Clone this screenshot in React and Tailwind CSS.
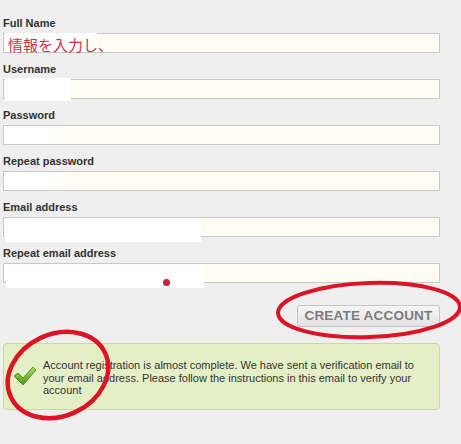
import React from 'react'

const fields = [
  { label: 'Full Name', cover: 'full' },
  { label: 'Username', cover: 'user' },
  { label: 'Password', cover: 'fade' },
  { label: 'Repeat password', cover: 'fade' },
  { label: 'Email address', cover: 'email' },
  { label: 'Repeat email address', cover: 'email2' },
]

// white patches painted over the inputs in the screenshot
function Cover({ kind }) {
  if (kind === 'full')
    return (
      <>
        <div className="absolute left-[1px] top-[-1px] w-[92px] h-[19px] bg-white" />
        <span className="absolute left-[4px] top-[2px] text-[15px] leading-[18px] text-[#cc3344] whitespace-nowrap font-['Noto_Sans_CJK_JP',sans-serif]">
          情報を入力し、
        </span>
      </>
    )
  if (kind === 'user') return <div className="absolute left-[1px] top-[-2px] w-[66px] h-[23px] bg-white" />
  if (kind === 'fade')
    return <div className="absolute left-0 top-0 w-[62px] h-full bg-gradient-to-r from-white from-70% to-transparent" />
  if (kind === 'email') return <div className="absolute left-[1px] top-[1px] w-[196px] h-[23px] bg-white" />
  return (
    <>
      <div className="absolute left-[2px] top-[1px] w-[198px] h-[23px] bg-white" />
      <div className="absolute left-[159px] top-[15px] w-[7px] h-[7px] rounded-full bg-[#c0283a]" />
    </>
  )
}

export default function App() {
  return (
    <div className="relative w-[461px] h-[444px] overflow-hidden bg-[#efefef] font-['Liberation_Sans',Arial,sans-serif]">
      <div className="pt-[17px] pl-[3px] w-[440px] flex flex-col">
        <div className="flex flex-col gap-[10px]">
          {fields.map((f) => (
            <div key={f.label} className="flex flex-col gap-[3px]">
              <div className="h-[13px] text-[11px] leading-[13px] font-bold text-[#333]">{f.label}</div>
              <div className="relative h-[20px] border border-[#c9c9c9] bg-[#fffdf3]">
                <Cover kind={f.cover} />
              </div>
            </div>
          ))}
        </div>

        <div className="flex justify-end pt-[22px]">
          <button className="w-[143px] h-[22px] rounded-[3px] border border-[#c6c6c6] bg-gradient-to-b from-[#f6f6f6] to-[#e2e2e2] text-[13.5px] leading-[20px] font-bold text-[#7c7c7c] tracking-[0.2px]">
            CREATE ACCOUNT
          </button>
        </div>

        <div className="mt-[16px] h-[67px] rounded-[4px] border border-[#c9d9a4] bg-[#e5efc6] flex items-start gap-[6px] pl-[9px]">
          <svg className="mt-[21px] shrink-0" width="24" height="22" viewBox="0 0 24 22">
            <defs>
              <linearGradient id="ck" x1="0" y1="0" x2="0" y2="1">
                <stop offset="0" stopColor="#a6dc5a" />
                <stop offset="1" stopColor="#4f9a1c" />
              </linearGradient>
            </defs>
            <path d="M1 11 L5 8 L10 13 L20 2 L23 5 L10 20 Z" fill="url(#ck)" stroke="#3f8014" strokeWidth="0.8" strokeLinejoin="round" />
          </svg>
          <p className="mt-[15px] w-[378px] text-[11px] leading-[12.5px] text-[#333]">
            Account registration is almost complete. We have sent a verification email to your email address. Please follow the instructions in this email to verify your account
          </p>
        </div>
      </div>

      <svg className="absolute left-0 top-0 pointer-events-none" width="461" height="444">
        <ellipse cx="369" cy="310" rx="91" ry="27" fill="none" stroke="#dd1426" strokeWidth="4" transform="rotate(-2 369 310)" />
        <ellipse cx="58" cy="375" rx="52" ry="41" fill="none" stroke="#dd1426" strokeWidth="4.5" transform="rotate(-25 58 375)" />
      </svg>
    </div>
  )
}
